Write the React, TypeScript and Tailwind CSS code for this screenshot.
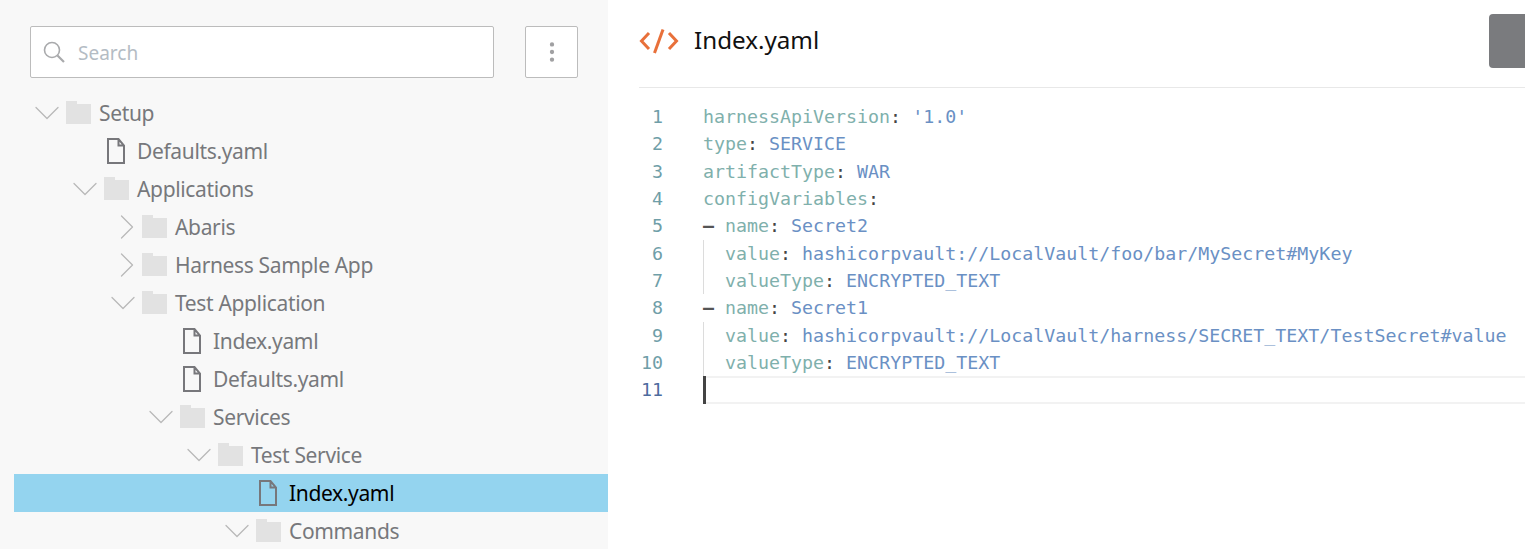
import React from 'react';
import { ChevronDown, ChevronRight, EllipsisVertical } from 'lucide-react';

type TreeRow = { label: string; depth: number; kind: 'open' | 'closed' | 'file'; selected?: boolean };

const rows: TreeRow[] = [
  { label: 'Setup', depth: 0, kind: 'open' },
  { label: 'Defaults.yaml', depth: 1, kind: 'file' },
  { label: 'Applications', depth: 1, kind: 'open' },
  { label: 'Abaris', depth: 2, kind: 'closed' },
  { label: 'Harness Sample App', depth: 2, kind: 'closed' },
  { label: 'Test Application', depth: 2, kind: 'open' },
  { label: 'Index.yaml', depth: 3, kind: 'file' },
  { label: 'Defaults.yaml', depth: 3, kind: 'file' },
  { label: 'Services', depth: 3, kind: 'open' },
  { label: 'Test Service', depth: 4, kind: 'open' },
  { label: 'Index.yaml', depth: 5, kind: 'file', selected: true },
  { label: 'Commands', depth: 5, kind: 'open' },
];

type CodeLine = { dash?: boolean; guide?: boolean; k?: string; v?: string };

const code: CodeLine[] = [
  { k: 'harnessApiVersion', v: "'1.0'" },
  { k: 'type', v: 'SERVICE' },
  { k: 'artifactType', v: 'WAR' },
  { k: 'configVariables' },
  { dash: true, k: 'name', v: 'Secret2' },
  { guide: true, k: 'value', v: 'hashicorpvault://LocalVault/foo/bar/MySecret#MyKey' },
  { guide: true, k: 'valueType', v: 'ENCRYPTED_TEXT' },
  { dash: true, k: 'name', v: 'Secret1' },
  { guide: true, k: 'value', v: 'hashicorpvault://LocalVault/harness/SECRET_TEXT/TestSecret#value' },
  { guide: true, k: 'valueType', v: 'ENCRYPTED_TEXT' },
];

const FolderIcon = () => (
  <svg width="25" height="23" viewBox="0 0 25 23" className="shrink-0">
    <path d="M0 0h11v3h14v20H0z" fill="#e2e2e2" />
  </svg>
);

const FileIcon = () => (
  <svg width="18" height="26" viewBox="0 0 18 26" fill="none" className="shrink-0">
    <path d="M1 1h10.5L17 7.5V25H1z M11.5 1v6.5H17" stroke="#77777b" strokeWidth="2" />
  </svg>
);

const SearchGlyph = () => (
  <svg width="22" height="22" viewBox="0 0 22 22" fill="none" stroke="#a9aaac" className="shrink-0">
    <circle cx="9" cy="9" r="7.5" strokeWidth="1.6" />
    <path d="M14.5 14.5 21 21" strokeWidth="2.2" />
  </svg>
);

const CodeGlyph = () => (
  <svg width="40" height="26" viewBox="0 0 40 26" fill="none" stroke="#e8703a" strokeWidth="3" className="shrink-0">
    <path d="M10 5 2.5 13 10 21" />
    <path d="M30 5 37.5 13 30 21" />
    <path d="M24 1.5 15.5 25" />
  </svg>
);

function Row({ row }: { row: TreeRow }) {
  const left = row.depth * 38;
  return (
    <div
      className={`flex h-[38px] items-center ${row.selected ? 'bg-[#94d4ef] text-black' : 'text-[#77787c]'}`}
      style={{ paddingLeft: left }}
    >
      {row.kind === 'file' ? (
        <span className="ml-[55px] mr-[12px] flex"><FileIcon /></span>
      ) : (
        <>
          {row.kind === 'open' ? (
            <span className="ml-[17px] mr-[3px] flex w-[32px] justify-center text-[#b9b9b9]">
              <ChevronDown size={44} strokeWidth={0.7} className="shrink-0" />
            </span>
          ) : (
            <span className="ml-[21px] mr-[-1px] flex w-[32px] justify-center text-[#b9b9b9]">
              <ChevronRight size={44} strokeWidth={0.7} className="shrink-0" />
            </span>
          )}
          <span className="mb-[2px] flex"><FolderIcon /></span>
          <span className="w-[8px]" />
        </>
      )}
      <span className="relative top-[1px] whitespace-nowrap">{row.label}</span>
    </div>
  );
}

export default function App() {
  return (
    <div className="flex h-[549px] w-[1525px] overflow-hidden bg-white font-['Noto_Sans',sans-serif]">
      {/* Left tree */}
      <div className="h-full w-[608px] shrink-0 bg-[#f8f8f8] pl-[14px]">
        <div className="flex items-stretch gap-[31px] pl-[16px] pr-[30px] pt-[26px]">
          <div className="flex h-[52px] w-[464px] items-center gap-[13px] rounded-[2px] border border-[#bcbcbc] bg-white pl-[12px]">
            <SearchGlyph />
            <span className="relative top-[1px] text-[19px] text-[#b4bcc4]">Search</span>
          </div>
          <div className="flex h-[52px] w-[53px] items-center justify-center rounded-[2px] border border-[#bcbcbc] bg-white">
            <EllipsisVertical size={26} strokeWidth={2} className="text-[#a0a0a2]" />
          </div>
        </div>
        <div className="pt-[16px] text-[21px] tracking-[-0.35px]">
          {rows.map((r, i) => (
            <Row key={i} row={r} />
          ))}
        </div>
      </div>

      {/* Editor */}
      <div className="min-w-0 flex-1 pl-[31px]">
        <div className="flex h-[88px] items-start border-b border-[#e8e8e8]">
          <span className="mt-[28px] flex"><CodeGlyph /></span>
          <span className="ml-[15px] mt-[21px] text-[24.2px] leading-[38px] text-[#111]">Index.yaml</span>
          <div className="ml-auto mt-[14px] h-[54px] w-[36px] rounded-l-[4px] bg-[#7a7b7e]" />
        </div>
        <div className="flex pt-[15px] font-['DejaVu_Sans_Mono',monospace] text-[18.3px] leading-[27.33px]">
          <div className="w-[24px] text-right text-[#6f9ea8]">
            {[...code, {}].map((_, i) => (
              <div key={i} className={i === 10 ? 'text-[#4d6c9e]' : ''}>{i + 1}</div>
            ))}
          </div>
          <div className="ml-[40px] flex-1">
            {code.map((l, i) => (
              <div key={i} className={`h-[27.33px] whitespace-pre ${l.guide ? 'shadow-[inset_1px_0_0_#dcdcdc]' : ''}`}>
                {l.dash && <span className="font-bold text-[#555]">– </span>}
                {l.guide && <span>  </span>}
                <span className="text-[#7fb0ac]">{l.k}</span>
                <span className="text-[#444]">:</span>
                {l.v && <span className="text-[#6a90c4]"> {l.v}</span>}
              </div>
            ))}
            <div className="relative h-[27.33px] border-y-2 border-[#f2f2f2]">
              <div className="absolute bottom-[-2px] left-0 top-[-2px] w-[3px] bg-[#444]" />
            </div>
          </div>
        </div>
      </div>
    </div>
  );
}
